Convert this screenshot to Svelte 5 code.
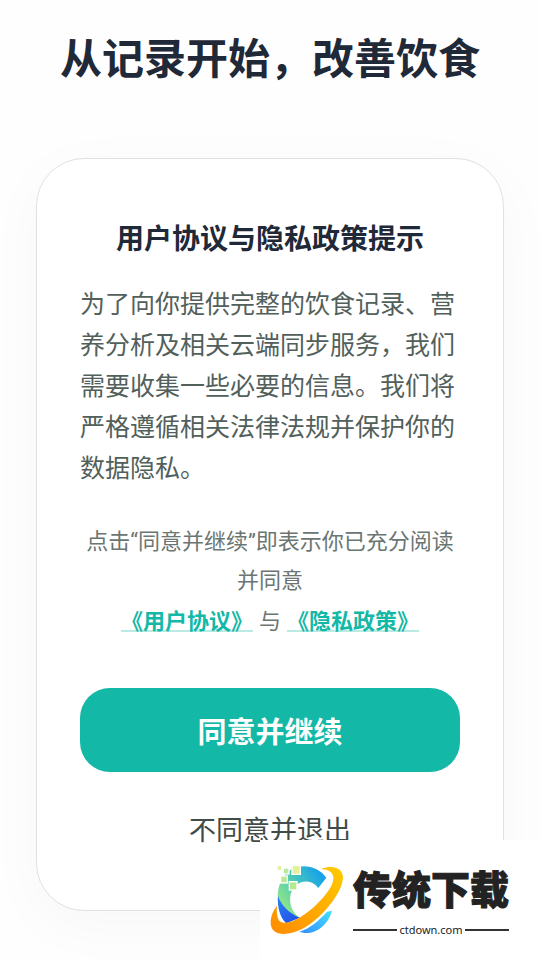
<script>
  const paragraph =
    '为了向你提供完整的饮食记录、营养分析及相关云端同步服务，我们需要收集一些必要的信息。我们将严格遵循相关法律法规并保护你的数据隐私。';

  const links = [
    { id: 'terms', label: '《用户协议》' },
    { id: 'privacy', label: '《隐私政策》' }
  ];

  // Loose pixels flying off the top left of the logo
  const pixels = [
    { x: 38, y: 33, w: 10, h: 12, fill: '#e3f2a4' },
    { x: 57, y: 41, w: 13, h: 14, fill: '#b9ea9d' },
    { x: 83, y: 33, w: 21, h: 23, fill: '#e3f299' },
    { x: 49, y: 65, w: 16, h: 17, fill: '#b5ea92' },
    { x: 75, y: 82, w: 19, h: 21, fill: '#b5ea92' }
  ];
</script>

<main>
  <h1>从记录开始，改善饮食</h1>

  <section class="card">
    <h2>用户协议与隐私政策提示</h2>
    <p class="intro">{paragraph}</p>
    <p class="notice">点击“同意并继续”即表示你已充分阅读并同意</p>
    <p class="links">
      <a href="#{links[0].id}">{links[0].label}</a>
      <span>与</span>
      <a href="#{links[1].id}">{links[1].label}</a>
    </p>
    <button class="agree" type="button">同意并继续</button>
    <button class="decline" type="button">不同意并退出</button>
  </section>
</main>

<aside class="brand">
  <svg viewBox="0 0 255 270" aria-hidden="true">
    <defs>
      <linearGradient id="arc" x1="0.2" y1="0.8" x2="1" y2="0.2">
        <stop offset="0" stop-color="#8ae58c" />
        <stop offset="0.5" stop-color="#43c3be" />
        <stop offset="1" stop-color="#119ef0" />
      </linearGradient>
      <linearGradient id="ring" x1="0" y1="1" x2="1" y2="0">
        <stop offset="0" stop-color="#ff8a00" />
        <stop offset="1" stop-color="#ffcb00" />
      </linearGradient>
      <linearGradient id="tail" x1="0" y1="1" x2="1" y2="0">
        <stop offset="0" stop-color="#348dff" />
        <stop offset="1" stop-color="#45e2ff" />
      </linearGradient>
      <linearGradient id="deep" x1="0" y1="0" x2="0.6" y2="1">
        <stop offset="0" stop-color="#2a87f5" />
        <stop offset="1" stop-color="#2253e8" />
      </linearGradient>
    </defs>
    <path fill="url(#arc)" d="M184 68C165 41 130 28 96 36C52 48 32 98 40 146C46 178 58 196 66 203L104 188C80 172 71 144 77 118C86 80 132 64 160 99Z" />
    <path fill="url(#deep)" d="M39 122C36 160 47 189 64 205L104 188C73 174 49 152 39 122Z" />
    <path fill="url(#tail)" d="M201 167C190 207 157 236 118 234L103 230C137 219 160 198 186 170Z" />
    <path fill="url(#ring)" d="M168 42C203 29 232 38 234 66C233 119 159 199 110 223C61 246 18 241 17 204C17 183 25 166 36 152C34 174 37 189 43 197C65 218 120 182 153 150C188 116 211 82 204 62C199 45 180 43 168 42Z" />
    {#each pixels as p}
      <rect x={p.x} y={p.y} width={p.w} height={p.h} fill={p.fill} stroke="#fff" stroke-width="8" paint-order="stroke" />
    {/each}
  </svg>
  <div class="brand-text">
    <strong>传统下载</strong>
    <span class="site">ctdown.com</span>
  </div>
</aside>

<style>
  :global(body) {
    margin: 0;
    background: #fefefe;
    font-family: Roboto, 'Noto Sans CJK SC', sans-serif;
  }

  main {
    padding: 30px 36px 48px;
    overflow: hidden;
  }

  h1,
  h2,
  p {
    margin: 0;
  }

  h1 {
    margin-bottom: 68px;
    color: #1f2937;
    font-size: 42px;
    line-height: 60px;
    font-weight: 700;
    text-align: center;
    white-space: nowrap;
  }

  .card {
    display: flex;
    flex-direction: column;
    padding: 61px 43px 58px;
    border: 1px solid #dce3e1;
    border-radius: 48px;
    background: #fff;
    box-shadow: 0 14px 60px rgba(0, 0, 0, 0.03);
  }

  h2 {
    margin-bottom: 24px;
    color: #1f2937;
    font-size: 28px;
    line-height: 40px;
    font-weight: 700;
    text-align: center;
  }

  .intro {
    margin-bottom: 33px;
    color: #52605b;
    font-size: 25px;
    line-height: 41px;
  }

  .notice,
  .links {
    color: #6b7572;
    font-size: 22px;
    line-height: 39px;
    text-align: center;
  }

  .links {
    display: flex;
    justify-content: center;
    gap: 6px;
    margin: 2px 0 47px;
  }

  a {
    color: #14b8a6;
    font-weight: 700;
    text-decoration: underline;
    text-decoration-color: #b9eae4;
    text-decoration-thickness: 2px;
    text-underline-offset: 1px;
    text-decoration-skip-ink: none;
  }

  button {
    padding: 0;
    border: 0;
    font-family: inherit;
    cursor: pointer;
  }

  .agree {
    height: 84px;
    border-radius: 30px;
    background: #14b8a6;
    color: #fff;
    font-size: 29px;
    font-weight: 700;
  }

  .decline {
    height: 48px;
    margin-top: 32px;
    background: none;
    color: #414b48;
    font-size: 27px;
  }

  .brand {
    position: fixed;
    right: 0;
    bottom: 0;
    display: flex;
    align-items: center;
    box-sizing: border-box;
    width: 280px;
    height: 120px;
    padding-left: 5px;
    background: #fff;
  }

  .brand svg {
    width: 85px;
    height: 90px;
  }

  .brand-text {
    width: 156px;
    margin-left: 3px;
    padding-top: 4px;
    color: #222;
  }

  strong {
    display: block;
    font-size: 39px;
    line-height: 50px;
    font-weight: 900;
    -webkit-text-stroke: 1px #222;
  }

  .site {
    display: flex;
    align-items: center;
    gap: 2px;
    margin-top: 6px;
    font-family: 'Noto Sans', sans-serif;
    font-size: 11px;
    line-height: 16px;
  }

  .site::before,
  .site::after {
    content: '';
    flex: 1;
    height: 2px;
    background: #333;
  }
</style>
